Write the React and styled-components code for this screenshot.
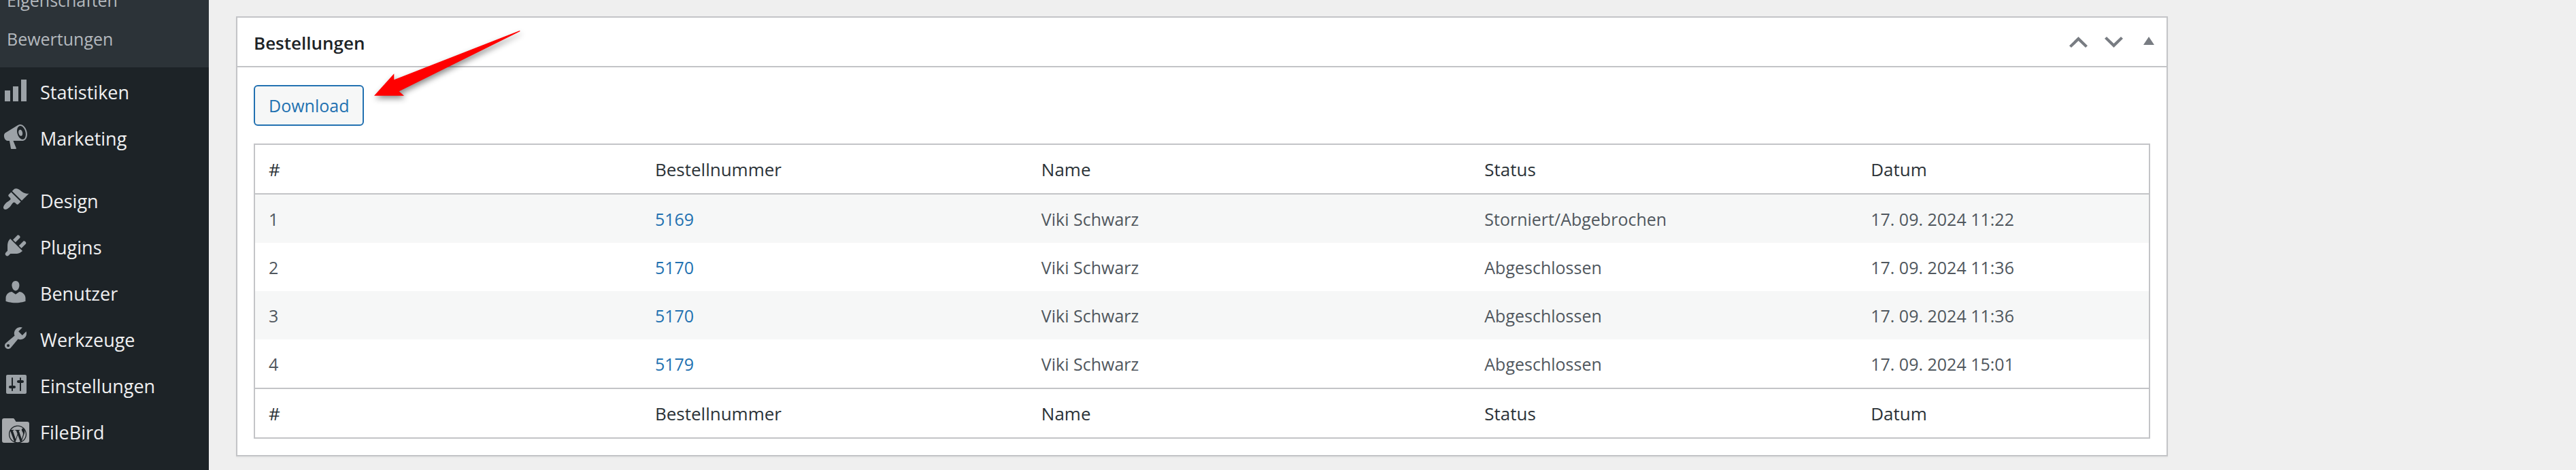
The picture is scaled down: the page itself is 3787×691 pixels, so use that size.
import React from 'react';
import styled, { createGlobalStyle } from 'styled-components';
import { FaWordpressSimple } from 'react-icons/fa';

const menuItems = [
  {
    label: 'Statistiken',
    path: 'M18 18V2h-4v16h4zm-6 0V7H8v11h4zm-6 0v-8H2v8h4z',
  },
  {
    label: 'Marketing',
    path: 'M18.15 5.94c.46 1.62.38 3.22-.02 4.48-.42 1.28-1.26 2.18-2.3 2.48-.16.06-.26.06-.4.06-.06.02-.12.02-.18.02-.06.02-.14.02-.22.02h-6.8l2.22 5.5c.02.14-.06.26-.14.34-.08.1-.24.16-.34.16H6.95c-.1 0-.26-.06-.34-.16-.08-.08-.16-.2-.14-.34l-1-5.5H4.25l-.02-.02c-.5.06-1.08-.18-1.54-.62s-.88-1.08-1.06-1.88c-.24-.8-.2-1.56-.02-2.2.18-.62.58-1.08 1.06-1.3l.02-.02 9-5.4c.1-.06.18-.1.24-.16.06-.04.14-.08.24-.12.16-.08.28-.12.5-.18 1.04-.3 2.24.1 3.22.98s1.84 2.24 2.26 3.86zm-2.58 5.98h-.02c.4-.1.74-.34 1.04-.7.58-.7.86-1.76.86-3.04 0-.64-.1-1.3-.28-1.98-.34-1.36-1.02-2.5-1.78-3.24s-1.68-1.1-2.46-.88c-.82.22-1.4.96-1.7 2-.32 1.04-.28 2.36.06 3.72.38 1.36 1 2.5 1.8 3.24.78.74 1.62 1.1 2.48.88zm-2.54-7.08c.22-.04.42-.02.62.04.38.16.76.48 1.02 1s.42 1.2.42 1.78c0 .3-.04.56-.12.8-.18.48-.44.84-.86.94-.34.1-.8-.06-1.14-.4s-.64-.86-.78-1.5c-.18-.62-.12-1.24.02-1.72s.48-.84.82-.94z',
  },
  {
    label: 'Design',
    startsGroup: true,
    path: 'M14.48 11.06L7.41 3.99l1.5-1.5c.5-.56 2.3-.47 3.51.32 1.21.8 1.43 1.28 2.91 2.1 1.18.64 2.45 1.26 4.45.85zm-.71.71L6.7 4.7 4.93 6.47c-.39.39-.39 1.02 0 1.41l1.06 1.06c.39.39.39 1.03 0 1.42-.6.6-1.43 1.11-2.21 1.69-.35.26-.7.53-1.01.84C1.43 14.23.4 16.08 1.4 17.07c.99 1 2.84-.03 4.18-1.36.31-.31.58-.66.85-1.02.57-.78 1.08-1.61 1.69-2.21.39-.39 1.02-.39 1.41 0l1.06 1.06c.39.39 1.02.39 1.41 0z',
  },
  {
    label: 'Plugins',
    path: 'M13.11 4.36L9.87 7.6 8 5.73l3.24-3.24c.35-.34 1.05-.2 1.56.32.52.51.66 1.21.31 1.55zm-8 1.77l.91-1.12 9.01 9.01-1.19.84c-.71.71-2.63 1.16-3.82 1.16H6.14L4.9 17.26c-.59.59-1.54.59-2.12 0-.59-.58-.59-1.53 0-2.12l1.24-1.24v-3.88c0-1.13.4-3.19 1.09-3.89zm7.26 3.97l3.24-3.24c.34-.35 1.04-.21 1.55.31.52.51.66 1.21.31 1.55l-3.24 3.25z',
  },
  {
    label: 'Benutzer',
    path: 'M10 9.25c-2.27 0-2.73-3.44-2.73-3.44C7 4.02 7.82 2 9.97 2c2.16 0 2.98 2.02 2.71 3.81 0 0-.41 3.44-2.68 3.44zm0 2.57L12.72 10c2.39 0 4.52 2.33 4.52 4.53v2.49s-3.65 1.13-7.24 1.13c-3.65 0-7.24-1.13-7.24-1.13v-2.49c0-2.25 1.94-4.48 4.47-4.48z',
  },
  {
    label: 'Werkzeuge',
    path: 'M16.68 9.77c-1.34 1.34-3.3 1.67-4.95.99l-5.41 6.52c-.99.99-2.59.99-3.58 0s-.99-2.59 0-3.57l6.52-5.42c-.68-1.65-.35-3.61.99-4.95 1.28-1.28 3.12-1.62 4.72-1.06l-2.89 2.89 2.82 2.82 2.86-2.87c.53 1.58.18 3.39-1.08 4.65zM3.81 16.21c.4.39 1.04.39 1.43 0 .4-.4.4-1.04 0-1.43-.39-.4-1.03-.4-1.43 0-.39.39-.39 1.03 0 1.43z',
  },
  {
    label: 'Einstellungen',
    path: 'M18 16V4c0-.55-.45-1-1-1H4c-.55 0-1 .45-1 1v12c0 .55.45 1 1 1h13c.55 0 1-.45 1-1zM8 11h1c.55 0 1 .45 1 1s-.45 1-1 1H8v1.5c0 .28-.22.5-.5.5s-.5-.22-.5-.5V13H6c-.55 0-1-.45-1-1s.45-1 1-1h1V5.5c0-.28.22-.5.5-.5s.5.22.5.5V11zm5-2h-1c-.55 0-1-.45-1-1s.45-1 1-1h1V5.5c0-.28.22-.5.5-.5s.5.22.5.5V7h1c.55 0 1 .45 1 1s-.45 1-1 1h-1v5.5c0 .28-.22.5-.5.5s-.5-.22-.5-.5V9z',
  },
  { label: 'FileBird' },
];

const columns = [
  { title: '#', share: 20.4 },
  { title: 'Bestellnummer', share: 20.4 },
  { title: 'Name', share: 23.4 },
  { title: 'Status', share: 20.4 },
  { title: 'Datum', share: 15.4 },
];

const orders = [
  { number: '5169', name: 'Viki Schwarz', status: 'Storniert/Abgebrochen', date: '17. 09. 2024 11:22' },
  { number: '5170', name: 'Viki Schwarz', status: 'Abgeschlossen', date: '17. 09. 2024 11:36' },
  { number: '5170', name: 'Viki Schwarz', status: 'Abgeschlossen', date: '17. 09. 2024 11:36' },
  { number: '5179', name: 'Viki Schwarz', status: 'Abgeschlossen', date: '17. 09. 2024 15:01' },
];

const GlobalStyle = createGlobalStyle`
  * {
    box-sizing: border-box;
  }

  body {
    margin: 0;
    background: #efefef;
    color: #50575e;
    font-family: "Segoe UI", "Open Sans", "Noto Sans", sans-serif;
    font-size: 25px;
  }
`;

const Page = styled.div`
  display: flex;
  min-height: 100vh;
  overflow: hidden;
`;

const Sidebar = styled.nav`
  flex: 0 0 307px;
  background: #1d2327;
`;

/* the menu is scrolled, so its first entry is cut by the window */
const SubMenu = styled.ul`
  margin: -28px 0 0;
  padding: 0 0 13px;
  list-style: none;
  background: #2c3338;
`;

const SubMenuLink = styled.a`
  display: block;
  padding: 0 10px;
  color: #b4b9be;
  line-height: 57px;
  text-decoration: none;
`;

const Menu = styled.ul`
  margin: 0;
  padding: 0;
  list-style: none;
`;

const MenuItem = styled.li`
  margin-top: ${({ $startsGroup }) => ($startsGroup ? '24px' : '0')};
`;

const MenuLink = styled.a`
  display: flex;
  align-items: center;
  gap: 16px;
  height: 68px;
  padding-left: 3px;
  color: #f0f0f1;
  font-size: 27px;
  text-decoration: none;
`;

const MenuLabel = styled.span`
  padding-top: 4px;
`;

const MenuIcon = styled.svg`
  flex: none;
  width: 40px;
  height: 40px;
  fill: #9ca2a7;
`;

const Content = styled.main`
  flex: 1;
  min-width: 0;
  padding: 24px 600px 20px 40px;
`;

const Panel = styled.section`
  position: relative;
  border: 2px solid #c3c4c7;
  background: #fff;
  box-shadow: 0 2px 2px rgba(0, 0, 0, .04);
`;

const PanelHeader = styled.header`
  display: flex;
  align-items: center;
  justify-content: space-between;
  height: 73px;
  padding-left: 24px;
  border-bottom: 2px solid #c3c4c7;
`;

const PanelTitle = styled.h2`
  margin: 0;
  padding-top: 2px;
  color: #1d2327;
  font-size: 26px;
  font-weight: 600;
`;

const PanelActions = styled.div`
  display: flex;
`;

const ActionButton = styled.button`
  display: flex;
  align-items: center;
  justify-content: center;
  width: 52px;
  height: 71px;
  padding: 0;
  border: 0;
  background: none;
  color: #787c82;
`;

const PanelBody = styled.div`
  padding: 26px 24px 24px;
`;

const DownloadButton = styled.button`
  display: block;
  height: 60px;
  margin-bottom: 26px;
  padding: 0 20px;
  border: 2px solid #2271b1;
  border-radius: 6px;
  background: #f6f7f7;
  color: #2271b1;
  font: inherit;
`;

const OrdersTable = styled.table`
  width: 100%;
  border: 2px solid #c3c4c7;
  border-spacing: 0;
  table-layout: fixed;
`;

const HeadCell = styled.th`
  width: ${({ $share }) => $share}%;
  height: 73px;
  padding: 0 20px;
  border-bottom: 2px solid #c3c4c7;
  color: #2c3338;
  font-size: 26px;
  font-weight: 400;
  text-align: left;
`;

const FootCell = styled(HeadCell)`
  border-top: 2px solid #c3c4c7;
  border-bottom: 0;
`;

const OrderRow = styled.tr`
  &:nth-child(odd) {
    background: #f6f7f7;
  }
`;

const Cell = styled.td`
  height: 71px;
  padding: 0 20px;
`;

const OrderLink = styled.a`
  color: #2271b1;
  text-decoration: none;
`;

const Arrow = styled.svg`
  position: absolute;
  top: 9px;
  left: 191px;
  width: 240px;
  height: 120px;
  fill: #f00;
  filter: drop-shadow(2px 4px 4px rgba(0, 0, 0, .45));
  pointer-events: none;
`;

function FolderIcon() {
  return (
    <MenuIcon viewBox="0 0 40 40" aria-hidden="true">
      <path fill="#a7aaad" d="M3 2h13c1 0 1.6.4 2.200 1.200L20.500 7H37a3 3 0 0 1 3 3v25a3 3 0 0 1-3 3H3a3 3 0 0 1-3-3V5a3 3 0 0 1 3-3z" />
      <FaWordpressSimple x="9.500" y="12" width="21" height="21" color="#1d2327" fill="#1d2327" />
    </MenuIcon>
  );
}

export default function App() {
  return (
    <Page>
      <GlobalStyle />
      <Sidebar>
        <SubMenu>
          <li><SubMenuLink href="#eigenschaften">Eigenschaften</SubMenuLink></li>
          <li><SubMenuLink href="#bewertungen">Bewertungen</SubMenuLink></li>
        </SubMenu>
        <Menu>
          {menuItems.map(({ label, path, startsGroup }) => (
            <MenuItem key={label} $startsGroup={startsGroup}>
              <MenuLink href={`#${label.toLowerCase()}`}>
                {path ? (
                  <MenuIcon viewBox="0 0 20 20" aria-hidden="true"><path d={path} /></MenuIcon>
                ) : (
                  <FolderIcon />
                )}
                <MenuLabel>{label}</MenuLabel>
              </MenuLink>
            </MenuItem>
          ))}
        </Menu>
      </Sidebar>
      <Content>
        <Panel>
          <PanelHeader>
            <PanelTitle>Bestellungen</PanelTitle>
            <PanelActions>
              <ActionButton type="button" aria-label="Nach oben">
                <svg width="27" height="16" viewBox="0 0 27 16" fill="currentColor">
                  <path d="M13.500 0L27 13.200 24 16 13.500 6 3 16 0 13.200z" />
                </svg>
              </ActionButton>
              <ActionButton type="button" aria-label="Nach unten">
                <svg width="27" height="16" viewBox="0 0 27 16" fill="currentColor">
                  <path d="M13.500 16L27 2.800 24 0 13.500 10 3 0 0 2.800z" />
                </svg>
              </ActionButton>
              <ActionButton type="button" aria-label="Zuklappen">
                <svg width="16" height="16" viewBox="0 0 16 16" fill="currentColor">
                  <path d="M8 0l8 12H0z" />
                </svg>
              </ActionButton>
            </PanelActions>
          </PanelHeader>
          <PanelBody>
            <DownloadButton type="button">Download</DownloadButton>
            <OrdersTable>
              <thead>
                <tr>
                  {columns.map(({ title, share }) => <HeadCell key={title} $share={share}>{title}</HeadCell>)}
                </tr>
              </thead>
              <tbody>
                {orders.map((order, index) => (
                  <OrderRow key={index}>
                    <Cell>{index + 1}</Cell>
                    <Cell><OrderLink href={`#order-${order.number}`}>{order.number}</OrderLink></Cell>
                    <Cell>{order.name}</Cell>
                    <Cell>{order.status}</Cell>
                    <Cell>{order.date}</Cell>
                  </OrderRow>
                ))}
              </tbody>
              <tfoot>
                <tr>
                  {columns.map(({ title }) => <FootCell as="td" key={title}>{title}</FootCell>)}
                </tr>
              </tfoot>
            </OrdersTable>
          </PanelBody>
          <Arrow viewBox="0 0 240 120" aria-hidden="true">
            <path d="M10 105.700L39.300 73.300v9L224 10l.7 1L46.700 99.300l7.300 6.400z" />
          </Arrow>
        </Panel>
      </Content>
    </Page>
  );
}
